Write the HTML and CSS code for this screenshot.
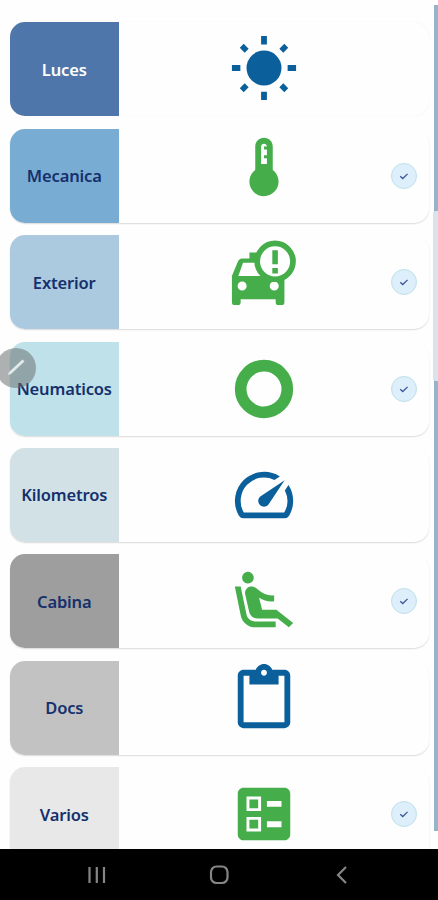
FILE: index.html
```html
<!DOCTYPE html>
<html lang="es">
<head>
<meta charset="utf-8">
<title>Inspección</title>
<link rel="stylesheet" href="styles.css">
</head>
<body>
<svg class="defs" aria-hidden="true">
  <symbol id="check" viewBox="0 0 27 27"><path d="M9.3 13.7l2.8 2.6 5.4-5.2" fill="none" stroke="#40569a" stroke-width="1.5"/></symbol>
</svg>
<div class="screen">
  <main class="list">
    <section class="card">
      <h2 class="label luces">Luces</h2>
      <div class="body">
        <svg class="icon blue sun" viewBox="0 0 24 24"><circle cx="12" cy="12" r="6"/><path d="M11 1h2v2.900h-2zM11 20.100h2V23h-2zM1 11h2.900v2H1zM20.100 11H23v2h-2.900z"/><path transform="rotate(45 12 12)" d="M11.050 1.200h1.900v2.400h-1.900zM11.050 20.400h1.900v2.400h-1.900zM1.200 11.050h2.400v1.900H1.200zM20.400 11.050h2.400v1.900h-2.400z"/></svg>
      </div>
    </section>
    <section class="card">
      <h2 class="label mecanica">Mecanica</h2>
      <div class="body">
        <svg class="icon green high" viewBox="0 0 24 24"><path d="M15 13V5c0-1.660-1.340-3-3-3S9 3.340 9 5v8c-1.210.91-2 2.370-2 4 0 2.760 2.240 5 5 5s5-2.240 5-5c0-1.630-.79-3.090-2-4zm-4-8c0-.55.45-1 1-1s1 .45 1 1h-1v1h1v2h-1v1h1v2h-2V5z"/></svg>
        <svg class="done"><use href="#check"/></svg>
      </div>
    </section>
    <section class="card">
      <h2 class="label exterior">Exterior</h2>
      <div class="body">
        <svg class="icon green high" viewBox="0 0 24 24"><path fill-rule="evenodd" d="M7 5h5v2l2 6h5v9q0 1-1 1h-1q-1 0-1-1v-1H4v1q0 1-1 1H2q-1 0-1-1v-9L3.100 8Q3.500 7 4.500 7H7zM4.800 8.500L3.200 13H14l-3-4.500zM4.500 14.900a1.550 1.550 0 1 0 0 3.100 1.550 1.550 0 0 0 0-3.100zM15.500 14.900a1.550 1.550 0 1 0 0 3.100 1.550 1.550 0 0 0 0-3.100z"/><path d="M13.500 13H19v1.500h-5.500z"/><circle cx="15.800" cy="8" r="6.150" fill="#fff" stroke="#45ad49" stroke-width="1.950"/><path d="M14.850 4.200h1.900v4.800h-1.900zM14.850 10.300h1.900v1.900h-1.900z"/></svg>
        <svg class="done"><use href="#check"/></svg>
      </div>
    </section>
    <section class="card">
      <h2 class="label neumaticos">Neumaticos</h2>
      <div class="body">
        <svg class="icon green" viewBox="0 0 24 24"><circle cx="12" cy="12" r="8" fill="none" stroke="#45ad49" stroke-width="4"/></svg>
        <svg class="done"><use href="#check"/></svg>
      </div>
    </section>
    <section class="card">
      <h2 class="label kilometros">Kilometros</h2>
      <div class="body">
        <svg class="icon blue" viewBox="0 0 24 24"><path d="M20.380 8.570l-1.230 1.850a8 8 0 0 1-.22 7.580H5.070A8 8 0 0 1 15.580 6.850l1.850-1.230A10 10 0 0 0 3.350 19a2 2 0 0 0 1.720 1h13.850a2 2 0 0 0 1.740-1 10 10 0 0 0-.27-10.440zm-9.790 6.840a2 2 0 0 0 2.830 0l5.660-8.490-8.490 5.660a2 2 0 0 0 0 2.830z"/></svg>
      </div>
    </section>
    <section class="card">
      <h2 class="label cabina">Cabina</h2>
      <div class="body">
        <svg class="icon green" viewBox="0 0 24 24"><path d="M5.350 5.640c-.9-.64-1.120-1.880-.49-2.790.63-.9 1.880-1.120 2.790-.49.9.64 1.120 1.880.49 2.790-.64.9-1.880 1.120-2.790.49zM16 19H8.930c-1.480 0-2.740-1.080-2.960-2.540L4 7H2l1.990 9.760C4.370 19.200 6.470 21 8.940 21H16v-2zm.23-4h-4.880l-1.030-4.100c1.580.89 3.280 1.540 5.150 1.220V9.990c-1.630.31-3.440-.27-4.690-1.250L9.140 7.470c-.23-.18-.49-.3-.76-.38-.32-.09-.66-.12-.99-.06h-.02c-1.230.22-2.050 1.390-1.840 2.610l1.350 5.920C7.160 16.980 8.390 18 9.830 18h6.850l3.820 3 1.500-1.500-5.770-4.500z"/></svg>
        <svg class="done"><use href="#check"/></svg>
      </div>
    </section>
    <section class="card">
      <h2 class="label docs">Docs</h2>
      <div class="body">
        <svg class="icon blue high" viewBox="0 0 24 24"><path d="M19 2h-4.180C14.400.84 13.300 0 12 0c-1.300 0-2.400.84-2.820 2H5c-1.100 0-2 .9-2 2v16c0 1.100.9 2 2 2h14c1.100 0 2-.9 2-2V4c0-1.100-.9-2-2-2zm-7 0c.55 0 1 .45 1 1s-.45 1-1 1-1-.45-1-1 .45-1 1-1zm7 18H5V4h2v3h10V4h2v16z"/></svg>
      </div>
    </section>
    <section class="card">
      <h2 class="label varios">Varios</h2>
      <div class="body">
        <svg class="icon green" viewBox="0 0 24 24"><path d="M13 9.500h5v-2h-5v2zm0 7h5v-2h-5v2zm6 4.500H5c-1.100 0-2-.9-2-2V5c0-1.100.9-2 2-2h14c1.100 0 2 .9 2 2v14c0 1.100-.9 2-2 2zM6 11h5V6H6v5zm1-4h3v3H7V7zM6 18h5v-5H6v5zm1-4h3v3H7v-3z"/></svg>
        <svg class="done"><use href="#check"/></svg>
      </div>
    </section>
  </main>
  <div class="scrollbar"><div class="thumb"></div></div>
  <div class="edit"><svg viewBox="0 0 40 40"><path d="M12 27l1-3L26.500 11.500l2 2L15 26z" fill="#e2e9ea"/></svg></div>
</div>
<nav class="nav">
  <svg viewBox="0 0 438 51"><g fill="none" stroke="#858585" stroke-width="2.200"><path d="M89.500 18v16M96.800 18v16M104 18v16"/><rect x="211" y="17.500" width="16.500" height="16.500" rx="5.500"/><path d="M346 18l-8 8 8 8"/></g></svg>
</nav>
</body>
</html>
```
FILE: styles.css
```css
* { box-sizing: border-box; }
body {
  margin: 0;
  width: 438px;
  height: 900px;
  display: flex;
  flex-direction: column;
  overflow: hidden;
  background: #fefefe;
  font-family: "Noto Sans", "Open Sans", sans-serif;
}
svg { display: block; }
.defs { position: absolute; width: 0; height: 0; }
.screen {
  position: relative;
  display: flex;
  justify-content: space-between;
  height: 849px;
  overflow: hidden;
}
.list {
  display: flex;
  flex-direction: column;
  gap: 12.4px;
  width: 419px;
  margin-left: 10px;
  padding-top: 22.4px;
}
.card {
  display: flex;
  flex: none;
  height: 94px;
  border-radius: 15px;
  overflow: hidden;
  background: #fefefe;
  box-shadow: 0 1px 1.5px rgba(0, 0, 0, .14);
}
.card:first-child { box-shadow: 0 0 1px rgba(0, 0, 0, .1); }
.label {
  display: flex;
  flex: none;
  align-items: center;
  justify-content: center;
  width: 108.5px;
  margin: 0;
  padding-top: 1px;
  color: #15306c;
  font-size: 16.5px;
  font-weight: 600;
  line-height: 22px;
  letter-spacing: -.15px;
}
.luces { background: #4f76aa; color: #fff; }
.mecanica { background: #78acd3; }
.exterior { background: #abc9df; }
.neumaticos { background: #bfe2ea; }
.kilometros { background: #d1e1e6; }
.cabina { background: #9e9e9e; }
.docs { background: #c2c2c2; }
.varios { background: #e8e8e8; }
.body {
  display: flex;
  flex: 1;
  align-items: center;
  justify-content: space-between;
  padding: 0 12px 0 110.5px;
}
.icon { width: 70px; height: 70px; }
.high { margin-bottom: 18px; }
.sun { margin-bottom: 2px; }
.blue { fill: #0b609b; }
.green { fill: #45ad49; }
.done {
  width: 26px;
  height: 26px;
  border: 1.5px solid #bfe0ea;
  border-radius: 50%;
  background: #dceffa;
}
.scrollbar {
  width: 4px;
  height: 826px;
  margin-top: 5px;
  padding-top: 206px;
  background: #98b3c7;
}
.thumb {
  width: 5px;
  height: 170px;
  margin-left: -1px;
  border-radius: 3px 0 0 3px;
  background: #dce2e8;
}
.edit {
  position: absolute;
  left: -4px;
  top: 348px;
  width: 40px;
  height: 40px;
  border-radius: 50%;
  background: rgba(105, 110, 110, .54);
}
.nav { height: 51px; background: #000; }
```
